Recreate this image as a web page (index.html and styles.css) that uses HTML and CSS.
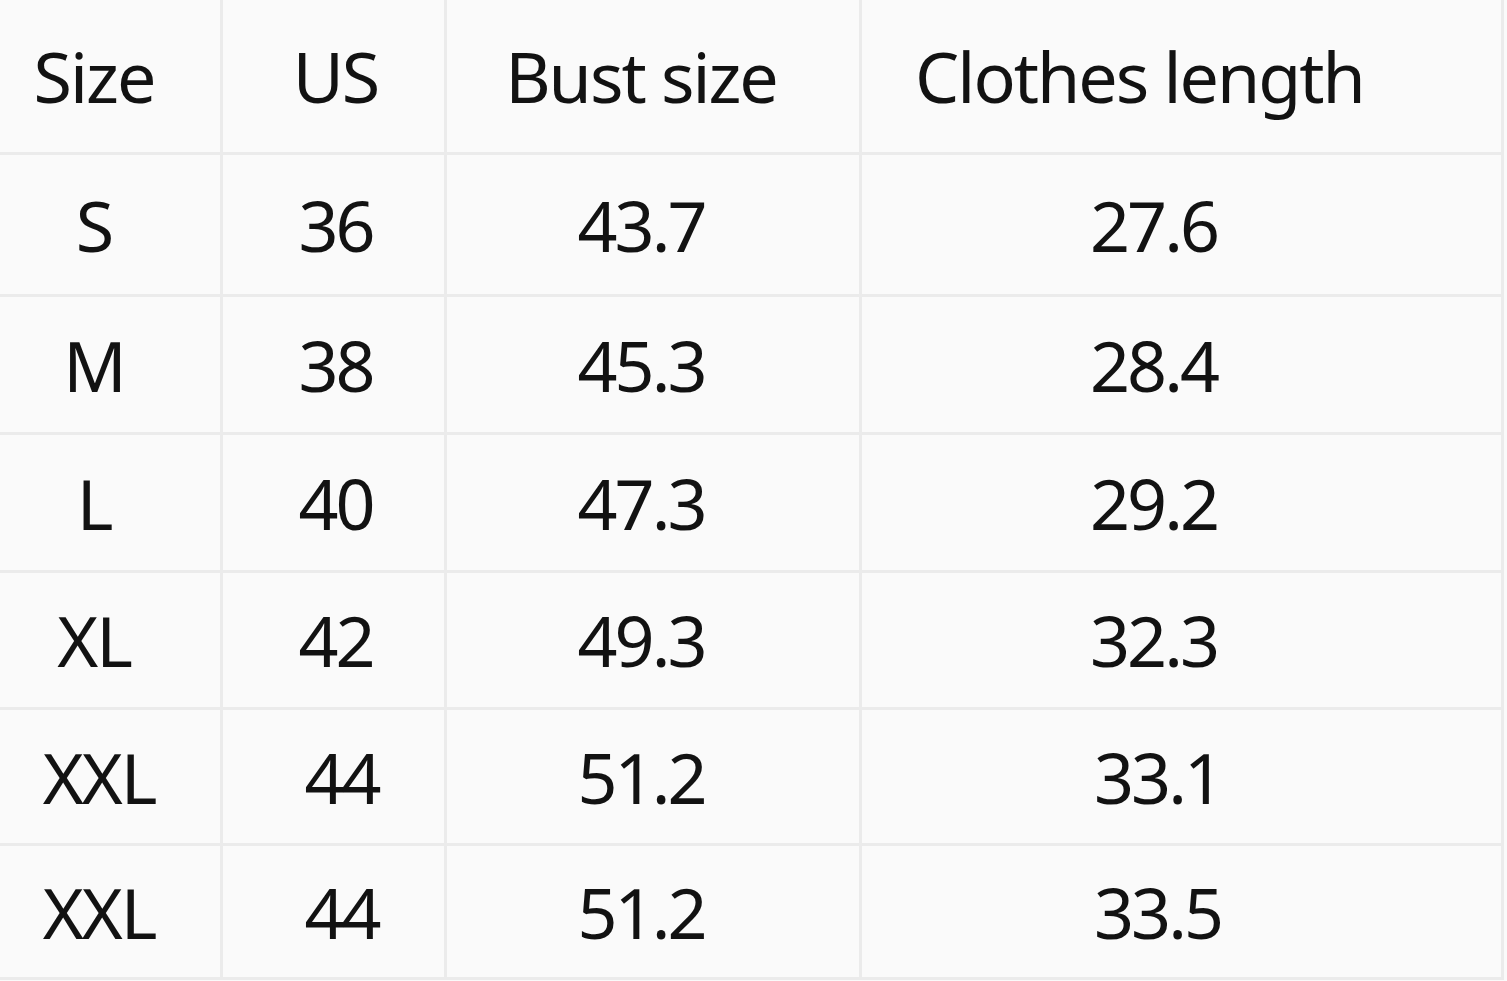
FILE: index.html
```html
<!DOCTYPE html>
<html>
<head>
<meta charset="utf-8">
<link rel="stylesheet" href="styles.css">
</head>
<body>
<div class="table">
  <div class="cell c1 head">Size</div>
  <div class="cell c2 head">US</div>
  <div class="cell c3 head">Bust size</div>
  <div class="cell c4 head">Clothes length</div>

  <div class="cell c1">S</div>
  <div class="cell c2 num">36</div>
  <div class="cell c3 num">43.7</div>
  <div class="cell c4 num">27.6</div>

  <div class="cell c1">M</div>
  <div class="cell c2 num">38</div>
  <div class="cell c3 num">45.3</div>
  <div class="cell c4 num">28.4</div>

  <div class="cell c1">L</div>
  <div class="cell c2 num">40</div>
  <div class="cell c3 num">47.3</div>
  <div class="cell c4 num">29.2</div>

  <div class="cell c1">XL</div>
  <div class="cell c2 num">42</div>
  <div class="cell c3 num">49.3</div>
  <div class="cell c4 num">32.3</div>

  <div class="cell c1 shift">XXL</div>
  <div class="cell c2 num shift">44</div>
  <div class="cell c3 num">51.2</div>
  <div class="cell c4 num shift">33.1</div>

  <div class="cell c1 shift">XXL</div>
  <div class="cell c2 num shift">44</div>
  <div class="cell c3 num">51.2</div>
  <div class="cell c4 num shift">33.5</div>
</div>
</body>
</html>
```

FILE: styles.css
```css
html, body {
  margin: 0;
  padding: 0;
  background: #fafafa;
}

.table {
  width: 1501px;
  padding: 0 3px 3px 0;
  display: grid;
  grid-template-columns: 220px 221px 412px 639px;
  grid-template-rows: 152px 139px 135px 135px 134px 133px 131px;
  gap: 3px;
  background: #ebebeb;
}

.cell {
  background: #fafafa;
  display: flex;
  align-items: center;
  justify-content: center;
  font-family: "Noto Sans", "Open Sans", sans-serif;
  font-size: 70px;
  color: #121212;
  letter-spacing: -2px;
  line-height: 1;
}

.num { letter-spacing: -3px; }

.c1 { padding-right: 32px; }
.c2 { padding-left: 4px; }
.c3 { padding-right: 24px; }
.c4 { padding-right: 56px; }
.c4.head { padding-right: 84px; }

.c1.shift { padding-right: 22px; }
.c2.shift { padding-left: 16px; }
.c4.shift { padding-right: 48px; }
```
